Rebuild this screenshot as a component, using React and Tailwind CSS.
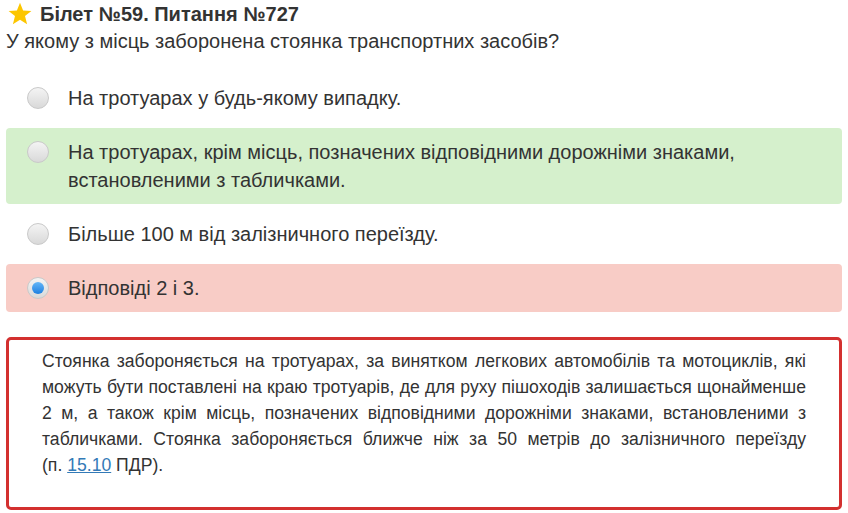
import React from 'react';

const options = [
  { text: 'На тротуарах у будь-якому випадку.', state: 'none' },
  { text: 'На тротуарах, крім місць, позначених відповідними дорожніми знаками, встановленими з табличками.', state: 'correct' },
  { text: 'Більше 100 м від залізничного переїзду.', state: 'none' },
  { text: 'Відповіді 2 і 3.', state: 'wrong', checked: true },
];

const Radio = ({ checked }) => (
  <span className="relative mt-[3px] flex h-[22px] w-[22px] shrink-0 items-center justify-center rounded-full border border-[#c9c9c9] bg-gradient-to-b from-[#f4f4f4] to-[#d9d9d9]">
    {checked && (
      <span className="h-[12px] w-[12px] rounded-full bg-gradient-to-b from-[#62b6f7] to-[#1a7fe0]" />
    )}
  </span>
);

const Star = () => (
  <svg width="24" height="24" viewBox="0 0 24 24" className="shrink-0">
    <polygon
      points="12,0.8 15.1,8.4 23.4,8.9 17,14.1 19.1,22.2 12,17.7 4.9,22.2 7,14.1 0.6,8.9 8.9,8.4"
      fill="#fcc600"
    />
  </svg>
);

const App = () => {
  return (
    <div className="w-[848px] h-[513px] overflow-hidden bg-white px-[6px] text-[#333] font-['Liberation_Sans',Arial,sans-serif]">
      <div className="flex items-center gap-[8px] pl-[2px] pt-[1px] h-[26px]">
        <Star />
        <h2 className="text-[20px] font-bold leading-[26px]">Білет №59. Питання №727</h2>
      </div>
      <p className="text-[20px] leading-[28px] pt-[1px]">У якому з місць заборонена стоянка транспортних засобів?</p>

      <div className="mt-[19px] flex flex-col gap-[6px]">
        {options.map((o, i) => (
          <div
            key={i}
            className={`flex items-start gap-[19px] rounded-[4px] pl-[21px] pr-[20px] py-[10px] ${
              o.state === 'correct' ? 'bg-[#d5f0cc]' : o.state === 'wrong' ? 'bg-[#f8ccc6]' : ''
            }`}
          >
            <Radio checked={o.checked} />
            <span className="text-[20px] leading-[28px]">{o.text}</span>
          </div>
        ))}
      </div>

      <div className="mt-[25px] h-[173px] rounded-[5px] border-[3px] border-[#d3302f] px-[33px] pt-[8px]">
        <p className="text-[17.6px] leading-[26px] text-justify">
          Стоянка забороняється на тротуарах, за винятком легкових автомобілів та мотоциклів, які можуть бути поставлені на краю тротуарів, де для руху пішоходів залишається щонайменше 2 м, а також крім місць, позначених відповідними дорожніми знаками, встановленими з табличками. Стоянка забороняється ближче ніж за 50 метрів до залізничного переїзду{' '}
          <span className="whitespace-nowrap">
            (п. <a href="#" className="text-[#337ab7] underline">15.10</a> ПДР).
          </span>
        </p>
      </div>
    </div>
  );
};

export default App;
